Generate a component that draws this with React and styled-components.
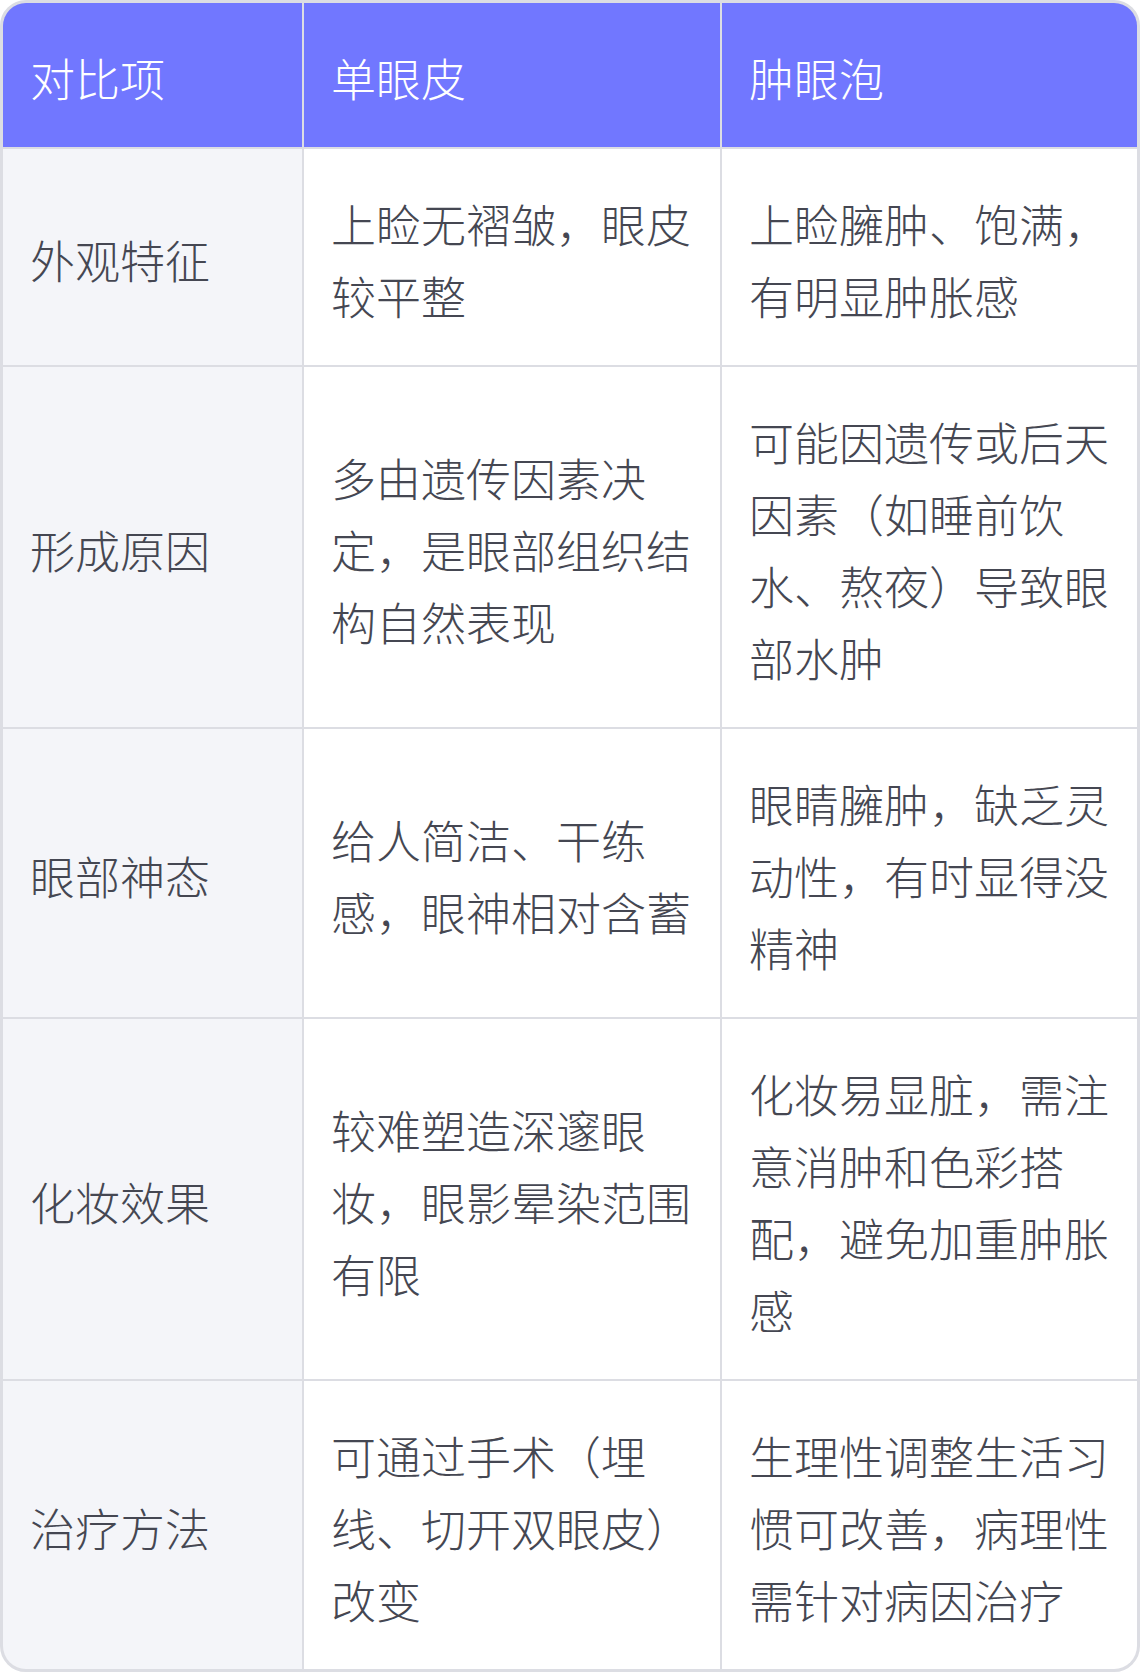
import React from 'react';
import styled, { createGlobalStyle } from 'styled-components';

const GlobalStyle = createGlobalStyle`
  html, body {
    margin: 0;
    padding: 0;
    background: #ffffff;
  }
  body {
    font-family: "Noto Sans CJK SC", "Noto Sans", sans-serif;
  }
`;

const Table = styled.div`
  width: 1140px;
  box-sizing: border-box;
  border: 3px solid #dcdde3;
  border-radius: 26px;
  overflow: hidden;
  display: grid;
  grid-template-columns: 299px 416px 415px;
  gap: 2px;
  background: #dcdde3;
`;

const Cell = styled.div`
  display: flex;
  align-items: center;
  padding: 39px 27px 33px;
  font-size: 45px;
  font-weight: 300;
  line-height: 72px;
  color: ${props => (props.$head ? '#ffffff' : '#454752')};
  background: ${props =>
    props.$head ? '#7177ff' : props.$label ? '#f4f5f9' : '#ffffff'};
  word-break: break-all;
`;

const headers = ['对比项', '单眼皮', '肿眼泡'];

const rows = [
  ['外观特征', '上睑无褶皱，眼皮较平整', '上睑臃肿、饱满，有明显肿胀感'],
  [
    '形成原因',
    '多由遗传因素决定，是眼部组织结构自然表现',
    '可能因遗传或后天因素（如睡前饮水、熬夜）导致眼部水肿'
  ],
  ['眼部神态', '给人简洁、干练感，眼神相对含蓄', '眼睛臃肿，缺乏灵动性，有时显得没精神'],
  [
    '化妆效果',
    '较难塑造深邃眼妆，眼影晕染范围有限',
    '化妆易显脏，需注意消肿和色彩搭配，避免加重肿胀感'
  ],
  ['治疗方法', '可通过手术（埋线、切开双眼皮）改变', '生理性调整生活习惯可改善，病理性需针对病因治疗']
];

export default function App() {
  return (
    <>
      <GlobalStyle />
      <Table>
        {headers.map(h => (
          <Cell key={h} $head>
            {h}
          </Cell>
        ))}
        {rows.map(row =>
          row.map((text, i) => (
            <Cell key={row[0] + i} $label={i === 0}>
              {text}
            </Cell>
          ))
        )}
      </Table>
    </>
  );
}
